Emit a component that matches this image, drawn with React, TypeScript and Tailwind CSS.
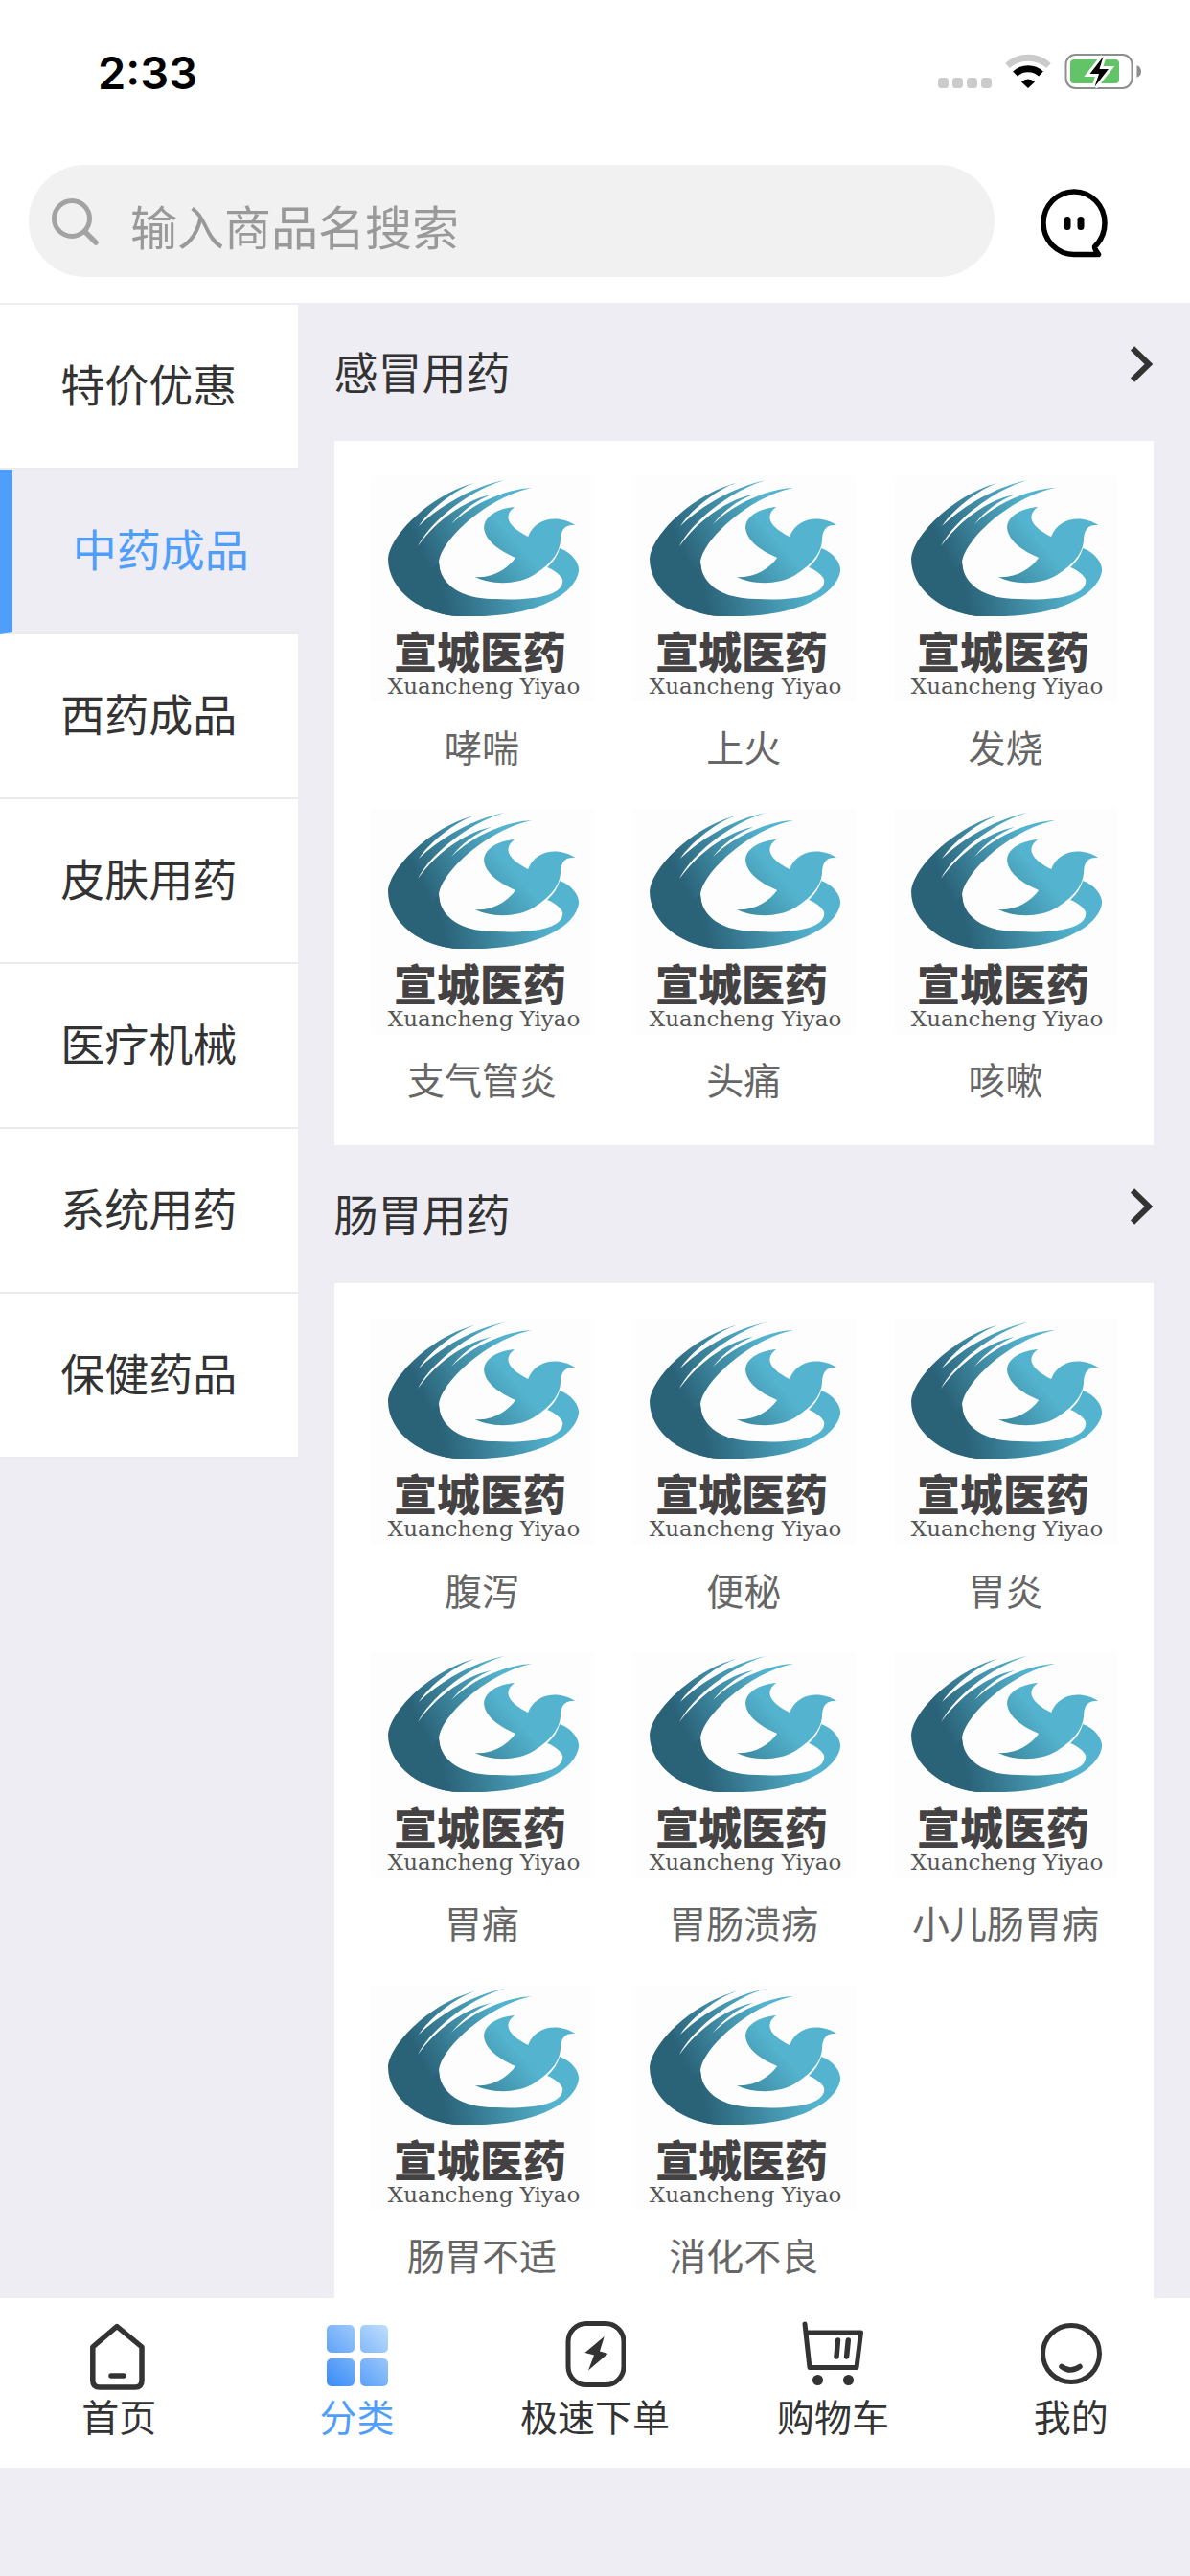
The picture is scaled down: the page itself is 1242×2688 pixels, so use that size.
const sideMenu = ['特价优惠', '中药成品', '西药成品', '皮肤用药', '医疗机械', '系统用药', '保健药品'];

const sections = [
  { title: '感冒用药', items: ['哮喘', '上火', '发烧', '支气管炎', '头痛', '咳嗽'] },
  {
    title: '肠胃用药',
    items: ['腹泻', '便秘', '胃炎', '胃痛', '胃肠溃疡', '小儿肠胃病', '肠胃不适', '消化不良'],
  },
];

function StatusBar() {
  return (
    <div className="flex h-[150px] items-center justify-between pl-[102px] pr-[50px] text-black">
      <span className="font-['Inter',sans-serif] text-[47px] font-semibold leading-none">2:33</span>
      <svg width="214" height="40" viewBox="0 0 214 40">
        <g fill="#cbcbcb">
          <rect x="1" y="26" width="11" height="11" rx="3.5" />
          <rect x="16" y="26" width="11" height="11" rx="3.5" />
          <rect x="31" y="26" width="11" height="11" rx="3.5" />
          <rect x="46" y="26" width="11" height="11" rx="3.5" />
        </g>
        <path d="M73.500 13.500A32.500 32.500 0 0 1 116.500 13.500" fill="none" stroke="#cbcbcb" strokeWidth="7" />
        <path d="M81.500 22A20 20 0 0 1 108.500 22" fill="none" stroke="#000" strokeWidth="7" />
        <path d="M88 30.500Q95 24.500 102 30.500L95 37Z" />
        <rect x="134.500" y="2" width="69" height="35" rx="10" fill="none" stroke="#8e8e8e" strokeWidth="2" />
        <rect x="139" y="7" width="51" height="25" rx="4" fill="#62c466" />
        <path d="M208.500 13Q213 15 213 19.500T208.500 26Z" fill="#8e8e8e" />
        <path d="M173.500 4L159.500 22H169L164.500 35.500L179 17H169.500Z" stroke="#fff" strokeWidth="6" />
        <path d="M173.500 4L159.500 22H169L164.500 35.500L179 17H169.500Z" />
      </svg>
    </div>
  );
}

function SearchBar() {
  return (
    <div className="flex items-center pb-[27px] pl-[30px] pr-[86px] pt-[22px]">
      <label className="flex h-[117px] flex-1 items-center rounded-full bg-[#f1f1f1] pl-6">
        <svg width="50" height="50" viewBox="0 0 50 50" fill="none" stroke="#a3a3a3">
          <circle cx="21" cy="22" r="18.5" strokeWidth="5" />
          <path d="M34.500 35.500L46 47" strokeWidth="5.5" strokeLinecap="round" />
        </svg>
        <input
          type="text"
          aria-label="输入商品名搜索"
          placeholder="输入商品名搜索"
          className="ml-8 min-w-0 flex-1 bg-transparent pt-2 text-[49px] leading-[72px] outline-none placeholder:text-[#999]"
        />
      </label>
      <button type="button" aria-label="消息" className="ml-12 pt-1">
        <svg width="70" height="72" viewBox="0 0 70 72" fill="none" stroke="#000">
          <path
            d="M35 68.500A32 32.800 0 1 1 67 36Q67 50 56.500 60.500Q57 64 60.500 68.500Z"
            strokeWidth="5.5"
            strokeLinejoin="round"
          />
          <path d="M28 32.500V39.500M42 32.500V39.500" strokeWidth="7" strokeLinecap="round" />
        </svg>
      </button>
    </div>
  );
}

function Logo() {
  return (
    <svg viewBox="0 0 233 235" className="w-full" role="img" aria-label="宣城医药">
      <defs>
        <linearGradient id="swoosh" gradientUnits="userSpaceOnUse" x1="60" y1="95" x2="150" y2="50">
          <stop offset="0" stopColor="#2a6278" />
          <stop offset="1" stopColor="#54b3ce" />
        </linearGradient>
        <linearGradient id="ring" gradientUnits="userSpaceOnUse" x1="75" y1="130" x2="185" y2="105">
          <stop offset="0" stopColor="#2a6278" />
          <stop offset="1" stopColor="#54b3ce" />
        </linearGradient>
        <linearGradient id="bird" gradientUnits="userSpaceOnUse" x1="95" y1="130" x2="158" y2="75">
          <stop offset="0" stopColor="#2f7288" />
          <stop offset="1" stopColor="#54b3ce" />
        </linearGradient>
      </defs>
      <rect width="233" height="235" fill="#fdfdfd" />
      <path
        fill="url(#swoosh)"
        d="M108 7C65 18 20 60 18 86C18 120 55 145 92 146L74 110L71 90C72 68 120 22 168 12C145 13 110 25 84 50C95 36 110 25 126 19C100 24 70 44 49 73C62 48 100 16 139 4C110 10 75 28 50 52C62 34 88 14 108 7Z"
      />
      <path
        fill="url(#ring)"
        d="M71 90C72 110 90 128 130 128C170 130 202 124 200 108C199 104 192 98 184 95Q194 86 197 75C210 80 217 90 217 98C214 124 170 146 110 146H92C60 145 50 130 50 110Z"
      />
      <path
        fill="url(#bird)"
        d="M150 32C136 33 118 40 118 54C120 70 138 79 151 85C142 97 128 106 109 105C122 112 150 115 170 103C190 90 198 78 198 64C199 54 204 50 213 51C197 40 172 42 164 63C150 56 134 44 150 32Z"
      />
      <text x="114" y="201" textAnchor="middle" fill="#454243" fontSize="45" fontWeight="900" className="font-['Noto_Sans_CJK_SC',sans-serif]">
        宣城医药
      </text>
      <text x="118" y="227" textAnchor="middle" fill="#555" fontSize="23" className="font-['DejaVu_Serif',serif]">
        Xuancheng Yiyao
      </text>
    </svg>
  );
}

function Section({ title, items }: { title: string; items: string[] }) {
  return (
    <section>
      <a href="#" className="flex h-36 items-center justify-between">
        <h2 className="pb-1 text-[46px] leading-[68px]">{title}</h2>
        <svg width="24" height="38" viewBox="0 0 24 38" fill="none" stroke="#333" strokeWidth="6" className="mb-4">
          <path d="M2 2.500L19 19L2 35.500" />
        </svg>
      </a>
      <div className="grid grid-cols-3 gap-x-10 gap-y-9 bg-white px-[38px] pb-10 pt-[37px]">
        {items.map((item) => (
          <a key={item} href="#" className="flex flex-col items-center text-[39px] text-[#666]">
            <Logo />
            <span className="whitespace-nowrap pt-4 leading-[60px]">{item}</span>
          </a>
        ))}
      </div>
    </section>
  );
}

function TabBar() {
  return (
    <nav className="grid shrink-0 grid-cols-5 bg-white text-[39px] leading-[52px]">
      <a href="#" className="flex h-[177px] flex-col items-center pt-6">
        <svg width="60" height="72" viewBox="0 0 60 72" fill="none" stroke="#333" strokeWidth="5.500">
          <path d="M2.800 27L28 5.500L54 27V62Q54 69 47 69H10Q2.800 69 2.800 62Z" strokeLinejoin="round" />
          <path d="M22 57H35" strokeLinecap="round" />
        </svg>
        <span>首页</span>
      </a>
      <a href="#" className="flex h-[177px] flex-col items-center pt-6 text-[#4f9efb]">
        <svg width="64" height="72" viewBox="0 0 64 72">
          <defs>
            <linearGradient id="tiles" gradientUnits="userSpaceOnUse" x1="4" y1="66" x2="60" y2="4">
              <stop offset="0" stopColor="#3f8ff7" />
              <stop offset="1" stopColor="#bcdcfc" />
            </linearGradient>
          </defs>
          <g fill="url(#tiles)">
            <rect x="0" y="4" width="29" height="29" rx="5" />
            <rect x="35" y="4" width="29" height="29" rx="5" />
            <rect x="0" y="39" width="29" height="29" rx="5" />
            <rect x="35" y="39" width="29" height="29" rx="5" />
          </g>
        </svg>
        <span>分类</span>
      </a>
      <a href="#" className="flex h-[177px] flex-col items-center pt-6">
        <svg width="64" height="72" viewBox="0 0 64 72">
          <rect x="4" y="2.500" width="58" height="64" rx="19" fill="none" stroke="#333" strokeWidth="5" />
          <path d="M41.700 16L21.500 33L31 35.500L25 51.500L45.500 34L37 31.500Z" fill="#333" />
        </svg>
        <span>极速下单</span>
      </a>
      <a href="#" className="flex h-[177px] flex-col items-center pt-6">
        <svg width="64" height="72" viewBox="0 0 64 72" fill="none" stroke="#333" strokeWidth="5" strokeLinecap="round" strokeLinejoin="round">
          <path d="M3 3L8 48.500H57L61.500 12H5" />
          <path d="M37.500 20L36 37M48.300 20L46.600 37" strokeWidth="5.500" />
          <circle cx="16.500" cy="61.500" r="5.500" fill="#333" stroke="none" />
          <circle cx="48.500" cy="61.500" r="5.500" fill="#333" stroke="none" />
        </svg>
        <span>购物车</span>
      </a>
      <a href="#" className="flex h-[177px] flex-col items-center pt-6">
        <svg width="64" height="72" viewBox="0 0 64 72" fill="none" stroke="#333" strokeWidth="5" strokeLinecap="round">
          <circle cx="32" cy="34" r="29.500" />
          <path d="M22 47.500Q31 54.500 41 47.500" strokeWidth="5.500" />
        </svg>
        <span>我的</span>
      </a>
    </nav>
  );
}

export default function App() {
  return (
    <div className="flex h-screen flex-col bg-[#eeedf3] pb-[113px] font-['Noto_Sans_CJK_SC',sans-serif] text-[#333]">
      <header className="shrink-0 bg-white">
        <StatusBar />
        <SearchBar />
      </header>
      <main className="flex min-h-0 flex-1 overflow-hidden">
        <aside className="w-1/4 shrink-0 pt-[2px]">
          {sideMenu.map((name) => (
            <a
              key={name}
              href="#"
              className={
                name === '中药成品'
                  ? 'flex h-[172px] items-center justify-center border-b-2 border-l-[13px] border-b-[#ebebed] border-l-[#4f9efb] pb-2 pl-3 text-[46px] text-[#4f9efb]'
                  : 'flex h-[172px] items-center justify-center border-b-2 border-[#ebebed] bg-white pb-2 text-[46px]'
              }
            >
              {name}
            </a>
          ))}
        </aside>
        <div className="min-w-0 flex-1 px-[38px]">
          {sections.map((s) => (
            <Section key={s.title} title={s.title} items={s.items} />
          ))}
        </div>
      </main>
      <TabBar />
    </div>
  );
}
